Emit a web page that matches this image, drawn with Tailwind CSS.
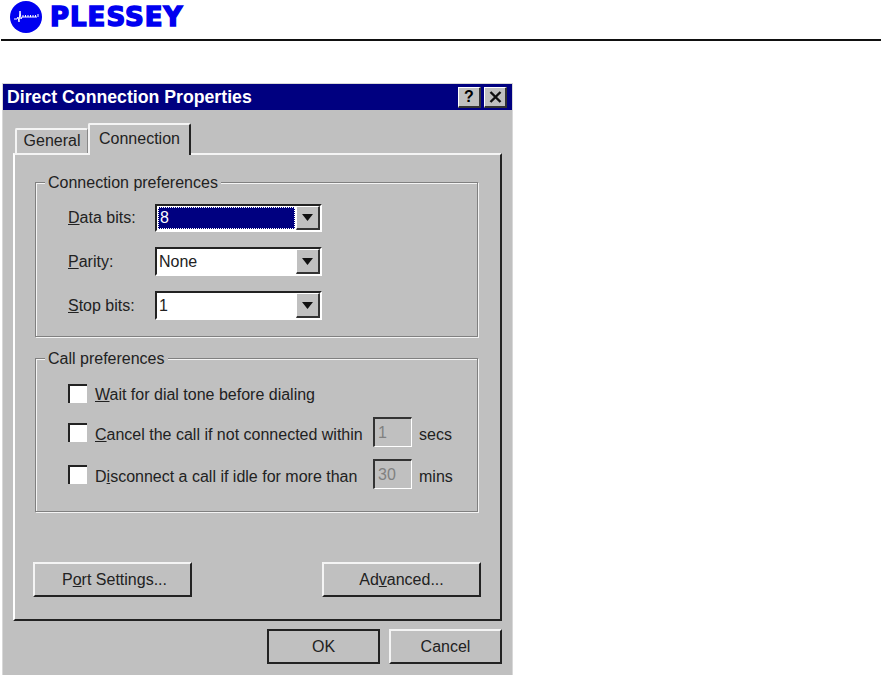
<!DOCTYPE html>
<html><head><meta charset="utf-8"><title>Direct Connection Properties</title>
<script src="https://cdn.jsdelivr.net/npm/@tailwindcss/browser@4"></script></head>
<body class="bg-white h-[675px] w-[883px] overflow-hidden font-['Liberation_Sans',Arial,sans-serif] text-[16px] text-[#222]">
<header class="h-[39px] flex items-start pl-[10px] pt-px gap-2">
  <svg class="w-[32px] h-[32px]" viewBox="0 0 32 32"><circle cx="16" cy="16" r="16" fill="#0000f0"/><path d="M4 18h3l1-2 1 5 1-11 1 8 1-2h15M13 16v-2M15.500 16v-2M18 16v-2M20.500 16v-2M23 16v-2M25.500 16v-2M28 16v-3" fill="none" stroke="#fff" stroke-width="1"/></svg>
  <span class="font-['DejaVu_Sans',sans-serif] font-bold text-[26px] leading-[30px] mt-px tracking-[1px] text-[#0000f0] [-webkit-text-stroke:1.5px_#0000f0]">PLESSEY</span>
</header>
<div class="ml-px w-[880px] h-[2px] bg-[#111]"></div>
<main class="ml-[2px] mt-[42px] w-[511px] h-[592px] bg-[#c0c0c0] border-l border-t border-r border-[#d8d8d8] flex flex-col">
  <div class="h-[26px] bg-[#000080] flex items-center justify-between pl-[4px] pr-[5px]">
    <span class="text-white font-bold text-[17.7px] whitespace-nowrap">Direct Connection Properties</span>
    <div class="flex gap-[3px]">
      <button class="w-[23px] h-[21px] bg-[#c0c0c0] border-l border-t border-white border-r-2 border-b-2 border-r-[#333] border-b-[#333] flex items-center justify-center font-bold text-[16px] leading-none text-black">?</button>
      <button class="w-[23px] h-[21px] bg-[#c0c0c0] border-l border-t border-white border-r-2 border-b-2 border-r-[#333] border-b-[#333] flex items-center justify-center">
        <svg class="w-[13px] h-[12px]" viewBox="0 0 13 12"><path d="M1.5 1l10 10M11.5 1l-10 10" stroke="#111" stroke-width="2.4" fill="none"/></svg>
      </button>
    </div>
  </div>
  <div class="h-[20px] flex-none"></div>
  <nav class="flex items-end pl-[12px] h-[27px] -mt-[4px] mb-0 flex-none relative z-10">
    <div class="w-[73px] h-[25px] border-l-2 border-t-2 border-[#f4f4f4] border-r border-r-[#888] rounded-t-[2px] flex items-center justify-center pb-[2px]">General</div>
    <div class="w-[103px] h-[32px] -mb-[2px] bg-[#c0c0c0] border-l-2 border-t-2 border-[#f4f4f4] border-r-2 border-r-[#222] rounded-t-[2px] flex items-center justify-center pb-[3px]">Connection</div>
  </nav>
  <section class="ml-[10px] w-[489px] h-[468px] flex-none border-l-2 border-t-2 border-l-white border-t-[#f4f4f4] border-r-2 border-r-[#222] border-b-2 border-b-[#222] px-[20px] pt-[27px]">
    <fieldset class="relative h-[155px] w-[443px] border border-[#808080] shadow-[1px_1px_0_#f4f4f4,inset_1px_1px_0_#f4f4f4] pl-[32px] pt-[21px] flex flex-col gap-[15px]">
      <span class="absolute left-[9px] -top-[9px] bg-[#c0c0c0] px-[3px] leading-[18px] whitespace-nowrap">Connection preferences</span>
      <div class="flex items-center h-[28px]">
        <label class="w-[87px]"><u>D</u>ata bits:</label>
        <div class="w-[167px] h-[28px] bg-white border-2 border-[#222] border-b-white border-r-white flex items-stretch">
          <div class="flex-1 bg-[#000080] m-px border border-dotted border-white text-white flex items-center pl-[1px] leading-none">8</div>
          <div class="w-[24px] bg-[#c0c0c0] border-l border-t border-white border-r-2 border-b-2 border-r-[#333] border-b-[#333] flex items-center justify-center"><svg class="w-[11px] h-[7px]" viewBox="0 0 11 7"><path d="M0 0h11L5.500 7z" fill="#111"/></svg></div>
        </div>
      </div>
      <div class="flex items-center h-[29px]">
        <label class="w-[87px]"><u>P</u>arity:</label>
        <div class="w-[167px] h-[29px] bg-white border-2 border-[#222] border-b-white border-r-white flex items-stretch">
          <div class="flex-1 flex items-center pl-[2px] leading-none">None</div>
          <div class="w-[24px] bg-[#c0c0c0] border-l border-t border-white border-r-2 border-b-2 border-r-[#333] border-b-[#333] flex items-center justify-center"><svg class="w-[11px] h-[7px]" viewBox="0 0 11 7"><path d="M0 0h11L5.500 7z" fill="#111"/></svg></div>
        </div>
      </div>
      <div class="flex items-center h-[29px]">
        <label class="w-[87px]"><u>S</u>top bits:</label>
        <div class="w-[167px] h-[29px] bg-white border-2 border-[#222] border-b-white border-r-white flex items-stretch">
          <div class="flex-1 flex items-center pl-[2px] leading-none">1</div>
          <div class="w-[24px] bg-[#c0c0c0] border-l border-t border-white border-r-2 border-b-2 border-r-[#333] border-b-[#333] flex items-center justify-center"><svg class="w-[11px] h-[7px]" viewBox="0 0 11 7"><path d="M0 0h11L5.500 7z" fill="#111"/></svg></div>
        </div>
      </div>
    </fieldset>
    <fieldset class="relative mt-[21px] h-[154px] w-[443px] border border-[#808080] shadow-[1px_1px_0_#f4f4f4,inset_1px_1px_0_#f4f4f4] pl-[32px] pt-[23px] flex flex-col">
      <span class="absolute left-[9px] -top-[9px] bg-[#c0c0c0] px-[3px] leading-[18px] whitespace-nowrap">Call preferences</span>
      <div class="flex items-center h-[22px] gap-[8px]">
        <span class="w-[19px] h-[19px] bg-white border-l-2 border-t-2 border-[#222] flex-none"></span>
        <span class="whitespace-nowrap pt-[3px]"><u>W</u>ait for dial tone before dialing</span>
      </div>
      <div class="flex items-center h-[30px] mt-[13px] gap-[8px]">
        <span class="w-[19px] h-[19px] bg-white border-l-2 border-t-2 border-[#222] flex-none"></span>
        <span class="whitespace-nowrap w-[270px] pt-[5px]"><u>C</u>ancel the call if not connected within</span>
        <div class="w-[39px] h-[30px] bg-[#c0c0c0] border-l-2 border-t-2 border-[#333] border-r border-b border-r-white border-b-white text-[#808080] pl-[3px] flex items-center leading-none flex-none">1</div>
        <span class="-ml-px pt-[5px]">secs</span>
      </div>
      <div class="flex items-center h-[30px] mt-[12px] gap-[8px]">
        <span class="w-[19px] h-[19px] bg-white border-l-2 border-t-2 border-[#222] flex-none"></span>
        <span class="whitespace-nowrap w-[270px] pt-[5px]">D<u>i</u>sconnect a call if idle for more than</span>
        <div class="w-[39px] h-[30px] bg-[#c0c0c0] border-l-2 border-t-2 border-[#333] border-r border-b border-r-white border-b-white text-[#808080] pl-[3px] flex items-center leading-none flex-none">30</div>
        <span class="-ml-px pt-[5px]">mins</span>
      </div>
    </fieldset>
    <div class="mt-[50px] -ml-[2px] flex justify-between w-[448px]">
      <button class="w-[159px] h-[35px] bg-[#c0c0c0] border-l-2 border-t-2 border-[#f4f4f4] border-r-2 border-b-2 border-r-[#222] border-b-[#222] pl-[4px]"><span>P<u>o</u>rt Settings...</span></button>
      <button class="w-[159px] h-[35px] bg-[#c0c0c0] border-l-2 border-t-2 border-[#f4f4f4] border-r-2 border-b-2 border-r-[#222] border-b-[#222]"><span>Ad<u>v</u>anced...</span></button>
    </div>
  </section>
  <footer class="flex gap-[9px] pl-[264px] pt-[8px]">
    <button class="w-[113px] h-[35px] bg-[#c0c0c0] border-2 border-[#222]">OK</button>
    <button class="w-[113px] h-[35px] bg-[#c0c0c0] border-l-2 border-t-2 border-[#f4f4f4] border-r-2 border-b-2 border-r-[#222] border-b-[#222]">Cancel</button>
  </footer>
</main>
</body></html>
